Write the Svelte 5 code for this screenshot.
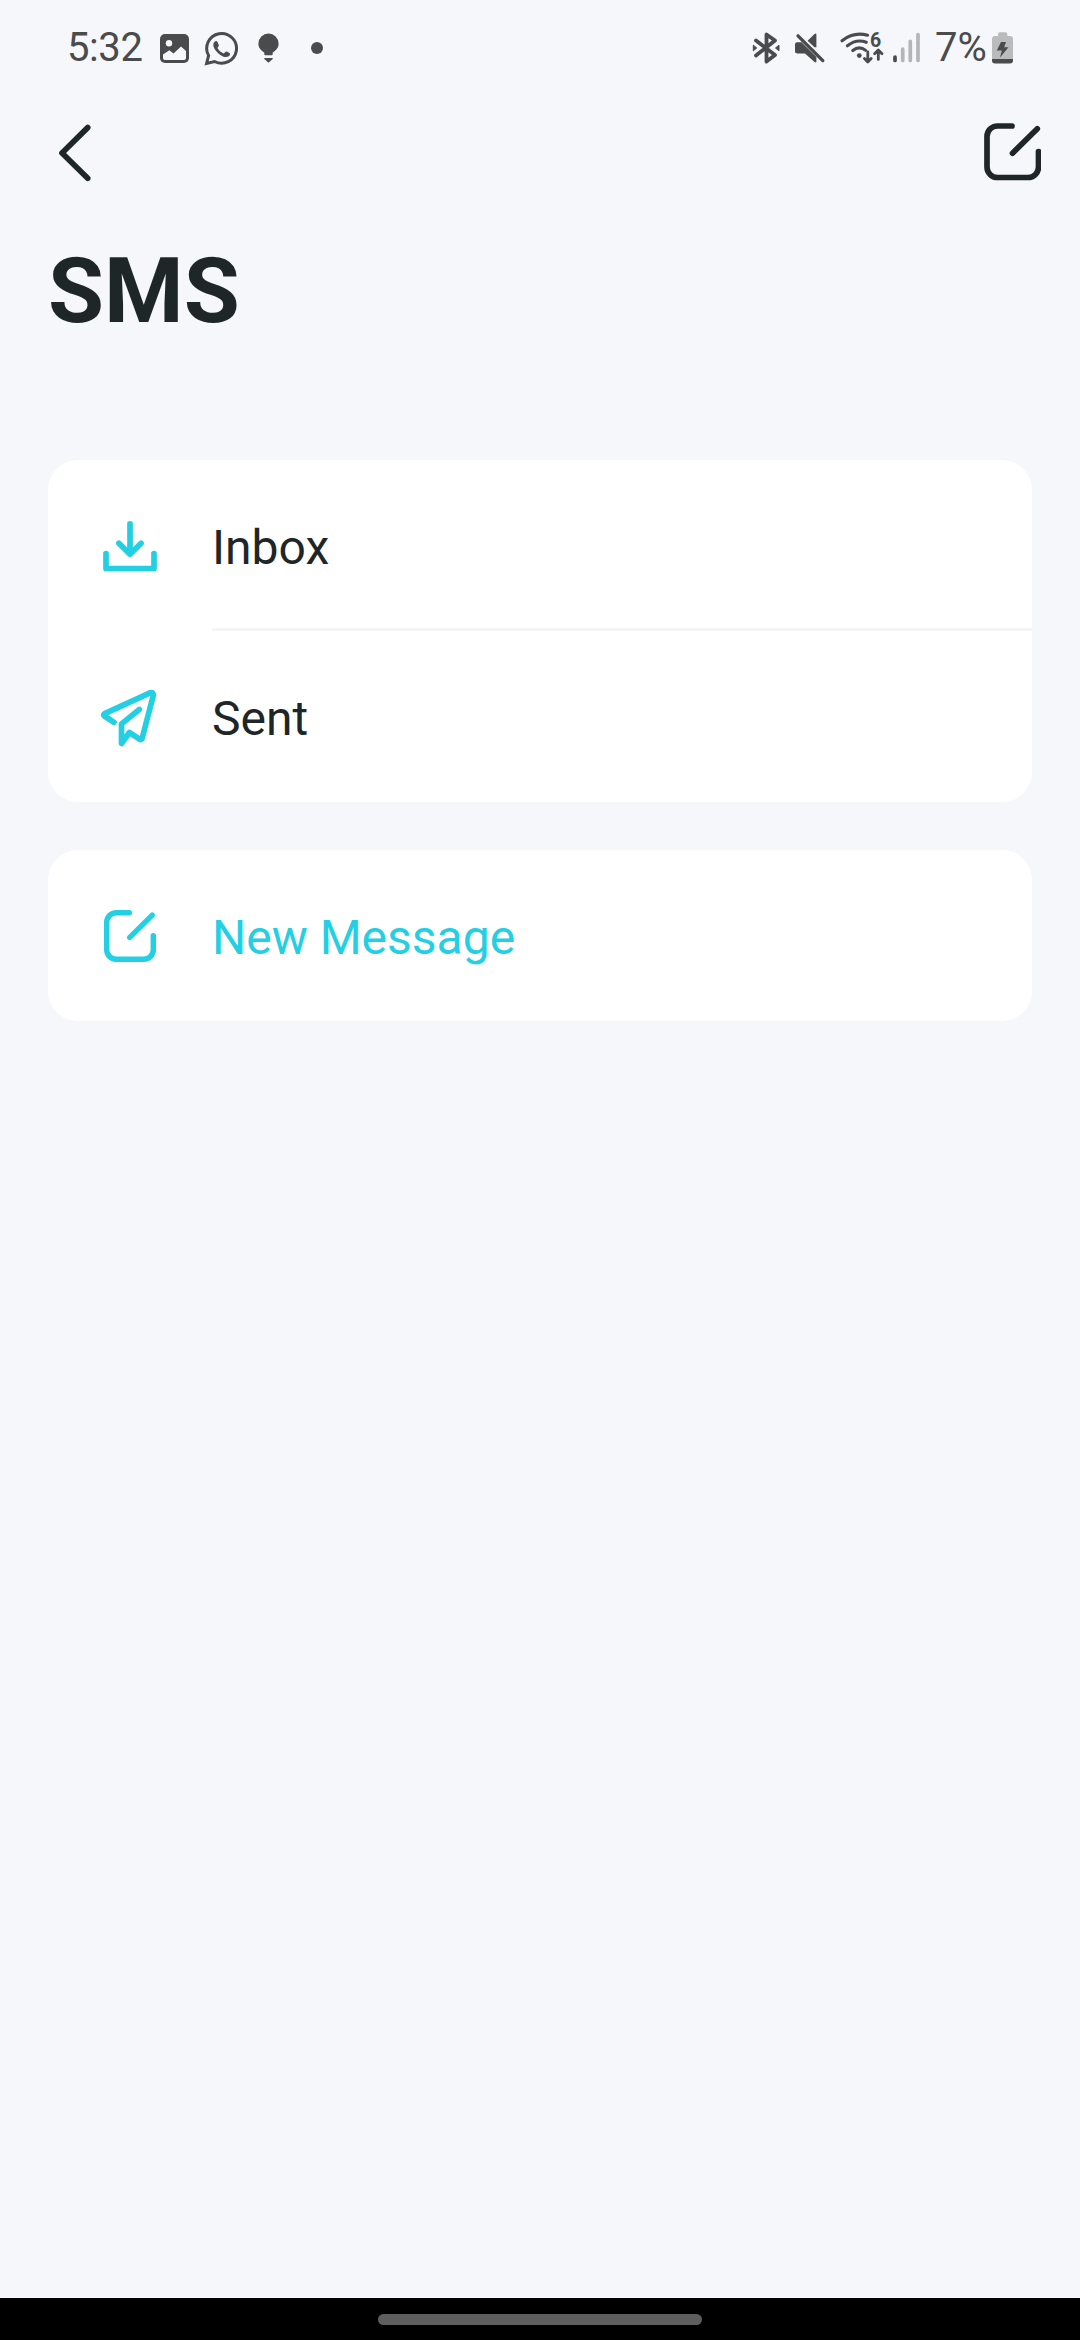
<script>
  const folders = [
    { id: 'inbox', label: 'Inbox' },
    { id: 'sent', label: 'Sent' }
  ];
</script>

{#snippet compose()}
  <path d="M28 3H13.5A10.5 10.5 0 0 0 3 13.5V44A10.5 10.5 0 0 0 13.5 54.5H44A10.5 10.5 0 0 0 54.5 44V28.5M53.3 5.7L28.5 30.3" />
{/snippet}

<div class="screen">
  <header class="status">
    <div class="side">
      <span class="clock">5:32</span>
      <svg class="s-image" viewBox="159 28 31 40">
        <rect x="160" y="34" width="29" height="29" rx="5" fill="#4a4b4d" />
        <circle cx="169" cy="43.2" r="3.2" fill="#f5f7fb" />
        <path d="M163 54.5L169.3 50.3L173.5 53.5L181 46.5L186 51V58Q186 60 184 60H165Q163 60 163 58Z" fill="#f5f7fb" />
      </svg>
      <svg class="s-chat" viewBox="204 28 36 40">
        <path d="M208.6 55.6A14.9 14.9 0 1 1 214.6 61.5L206.6 63.4Z" fill="none" stroke="#4a4b4d" stroke-width="3" />
        <path d="M214.6 41.8C215.6 40.7 217 40.8 217.5 42L218.8 45C219.1 46 218 47 217.4 47.9C218.9 50.6 221.2 52.4 223.8 53.4C224.9 52.6 225.7 51.1 226.8 51.5L229.4 52.9C230.5 53.5 230.1 55.1 229.1 55.9C226.8 57.7 223.9 57 221.2 55.4C217.8 53.5 214.7 50.4 213.5 46.6C213.1 45 213.3 43.1 214.6 41.8Z" fill="#4a4b4d" />
      </svg>
      <svg class="s-bulb" viewBox="257 28 23 40">
        <path d="M268.5 33.6A10.1 10.1 0 0 0 258.4 43.7C258.4 47.6 260.8 50.2 264.3 52.6V54.2Q264.3 55.2 265.3 55.2H271.7Q272.7 55.2 272.7 54.2V52.6C276.2 50.2 278.6 47.6 278.6 43.7A10.1 10.1 0 0 0 268.5 33.6ZM264.3 58H272.7V59L268.5 62.8L264.3 59Z" fill="#4a4b4d" />
      </svg>
      <svg class="s-dot" viewBox="310 28 14 40"><circle cx="317" cy="48" r="6" fill="#4a4b4d" /></svg>
    </div>
    <div class="side">
      <svg class="s-bt" viewBox="751 28 30 40">
        <path d="M756 40.5L775 55L766.5 61.5V34.5L775 40.5L756 55.5" fill="none" stroke="#4a4b4d" stroke-width="3.8" stroke-linecap="round" stroke-linejoin="round" />
        <path d="M753.3 45.2L756.8 48L753.3 50.8ZM779 45.2L775.5 48L779 50.8Z" fill="#4a4b4d" stroke="#4a4b4d" stroke-linejoin="round" />
      </svg>
      <svg class="s-mute" viewBox="794 28 32 40">
        <path d="M797 42.3H801.5L816.4 57V61.5Q816 63 814.5 62L805 53.5H797.5Q795 53.5 795 51V44.5Q795 42.3 797 42.3ZM807.6 40.8L814.5 34Q816.4 32.8 816.4 34.5V47.3L814.5 47.3Z" fill="#4a4b4d" />
        <path d="M798 35.8L822.8 60.6" stroke="#4a4b4d" stroke-width="3.3" stroke-linecap="round" />
      </svg>
      <svg class="s-wifi" viewBox="839 28 46 40">
        <g fill="none" stroke="#4a4b4d" stroke-width="3.1" stroke-linecap="round" stroke-linejoin="round">
          <path d="M842 40.8Q853.5 31.5 867.6 35.2M847.4 45.8Q856.5 38.5 866.3 42.3M852.8 50.5Q859.3 45.3 865.7 50.4" />
          <path d="M867.8 51.8V61.5M864.4 58.6L867.8 62L871.2 58.6M878.3 59.4V50.5M874.6 53.8L878.3 50.1L882 53.8" stroke-width="2.8" />
        </g>
        <circle cx="859.3" cy="55.6" r="2.4" fill="#4a4b4d" />
        <text x="870" y="46.5" class="gen">6</text>
      </svg>
      <svg class="s-signal" viewBox="892 28 30 40">
        <g stroke-width="3.7" stroke-linecap="round" stroke="#b4b5b8">
          <path d="M895 57V60.5" stroke="#4a4b4d" />
          <path d="M902.7 49.2V60.5M910.3 41.4V60.5M918 34.6V60.5" />
        </g>
      </svg>
      <span class="percent">7%</span>
      <svg class="s-batt" viewBox="991 28 23 40">
        <path d="M998 36V34Q998 32.2 999.8 32.2H1005.5Q1007.3 32.2 1007.3 34V36H1010Q1013 36 1013 39V59H992V39Q992 36 995 36Z" fill="#babbbd" />
        <path d="M992 59H1013V60.5Q1013 63.5 1010 63.5H995Q992 63.5 992 60.5Z" fill="#4a4b4d" />
        <path d="M1001 42H1006L1004.2 47.2H1008.5L1000 57.5L1001.8 50.6H996.8Z" fill="#4a4b4d" />
      </svg>
    </div>
  </header>

  <nav class="toolbar">
    <svg class="back" viewBox="58 122 34 62"><path d="M87.7 127.6L62 153L87.7 178.3" /></svg>
    <svg class="compose" viewBox="0 0 57.5 57.5">{@render compose()}</svg>
  </nav>

  <h1>SMS</h1>

  <main>
    <section class="card">
      {#each folders as folder}
        <div class="row">
          <div class="icon">
            {#if folder.id === 'inbox'}
              <svg class="glyph" viewBox="100 515.5 60 60">
                <path d="M106 553V568H154V553M130 523.3V553.5M118.9 542.8L130 553.7L141.1 542.8" />
              </svg>
            {:else}
              <svg class="glyph" viewBox="100 686.5 60 60">
                <path d="M114 721.8L104.4 715.5Q102.8 714.3 104.6 713.2L150 692.3Q153.8 691.3 153.2 695.2L142.2 737.6Q141.5 739.8 139.5 738.6L129.4 732L121.5 743V723.4L139.3 709" />
              </svg>
            {/if}
          </div>
          <span class="label">{folder.label}</span>
        </div>
      {/each}
    </section>

    <section class="card">
      <div class="row accent">
        <div class="icon"><svg class="glyph small" viewBox="0 0 57.5 57.5">{@render compose()}</svg></div>
        <span class="label">New Message</span>
      </div>
    </section>
  </main>

  <footer><div class="handle"></div></footer>
</div>

<style>
  :global(body) {
    margin: 0;
    background: #f5f7fb;
  }
  .screen {
    width: 1080px;
    height: 2340px;
    display: flex;
    flex-direction: column;
    background: #f5f7fb;
    color: #1f2628;
    font-family: Roboto, sans-serif;
  }
  svg {
    display: block;
    flex: none;
  }
  .status {
    height: 96px;
    box-sizing: border-box;
    padding: 0 66px 0 67px;
    display: flex;
    justify-content: space-between;
    color: #4a4b4d;
    font-size: 40px;
    line-height: 94px;
  }
  .side {
    display: flex;
    align-items: center;
  }
  .side svg {
    height: 40px;
  }
  .clock {
    width: 92px;
    letter-spacing: -0.4px;
  }
  .s-image {
    width: 31px;
    margin-right: 14px;
  }
  .s-chat {
    width: 36px;
    margin-right: 17px;
  }
  .s-bulb {
    width: 23px;
    margin-right: 30px;
  }
  .s-dot {
    width: 14px;
  }
  .s-bt {
    width: 30px;
    margin-right: 13px;
  }
  .s-mute {
    width: 32px;
    margin-right: 13px;
  }
  .s-wifi {
    width: 46px;
    margin-right: 7px;
  }
  .s-signal {
    width: 30px;
    margin-right: 13px;
  }
  .percent {
    width: 56px;
  }
  .s-batt {
    width: 23px;
  }
  .gen {
    font: 700 19.5px Roboto, sans-serif;
    fill: #4a4b4d;
  }
  .toolbar {
    height: 114px;
    box-sizing: border-box;
    padding: 0 39px 2px 58px;
    display: flex;
    align-items: center;
    justify-content: space-between;
  }
  .toolbar svg,
  .glyph {
    fill: none;
    stroke: #1f2628;
    stroke-width: 5.7;
    stroke-linecap: round;
    stroke-linejoin: round;
  }
  .back {
    width: 34px;
    height: 62px;
    margin-top: 2px;
  }
  .compose {
    width: 57.5px;
    height: 57.5px;
  }
  h1 {
    margin: 0;
    height: 250px;
    padding: 28px 48px 0;
    box-sizing: border-box;
    font-size: 91px;
    line-height: 106px;
    font-weight: 700;
  }
  main {
    flex: 1;
    padding: 0 48px;
    display: flex;
    flex-direction: column;
    gap: 48px;
  }
  .card {
    background: #fff;
    border-radius: 30px;
    overflow: hidden;
  }
  .row {
    height: 171px;
    padding-left: 52px;
    display: flex;
    align-items: center;
  }
  .icon {
    width: 112px;
    flex: none;
  }
  .glyph {
    width: 60px;
    height: 60px;
    stroke: #22cfe3;
  }
  .small {
    width: 52px;
    height: 52px;
    margin: 4px;
    stroke-width: 6;
  }
  .label {
    flex: 1;
    height: 171px;
    box-sizing: border-box;
    padding-top: 4px;
    font-size: 48px;
    line-height: 168px;
  }
  .row:not(:last-child) .label {
    border-bottom: 3px solid #f5f5f6;
  }
  .accent {
    color: #22cfe3;
  }
  footer {
    height: 42px;
    box-sizing: border-box;
    padding-top: 16px;
    background: #000;
  }
  .handle {
    width: 324px;
    height: 11px;
    margin: 0 auto;
    border-radius: 6px;
    background: #5e5e5e;
  }
</style>
